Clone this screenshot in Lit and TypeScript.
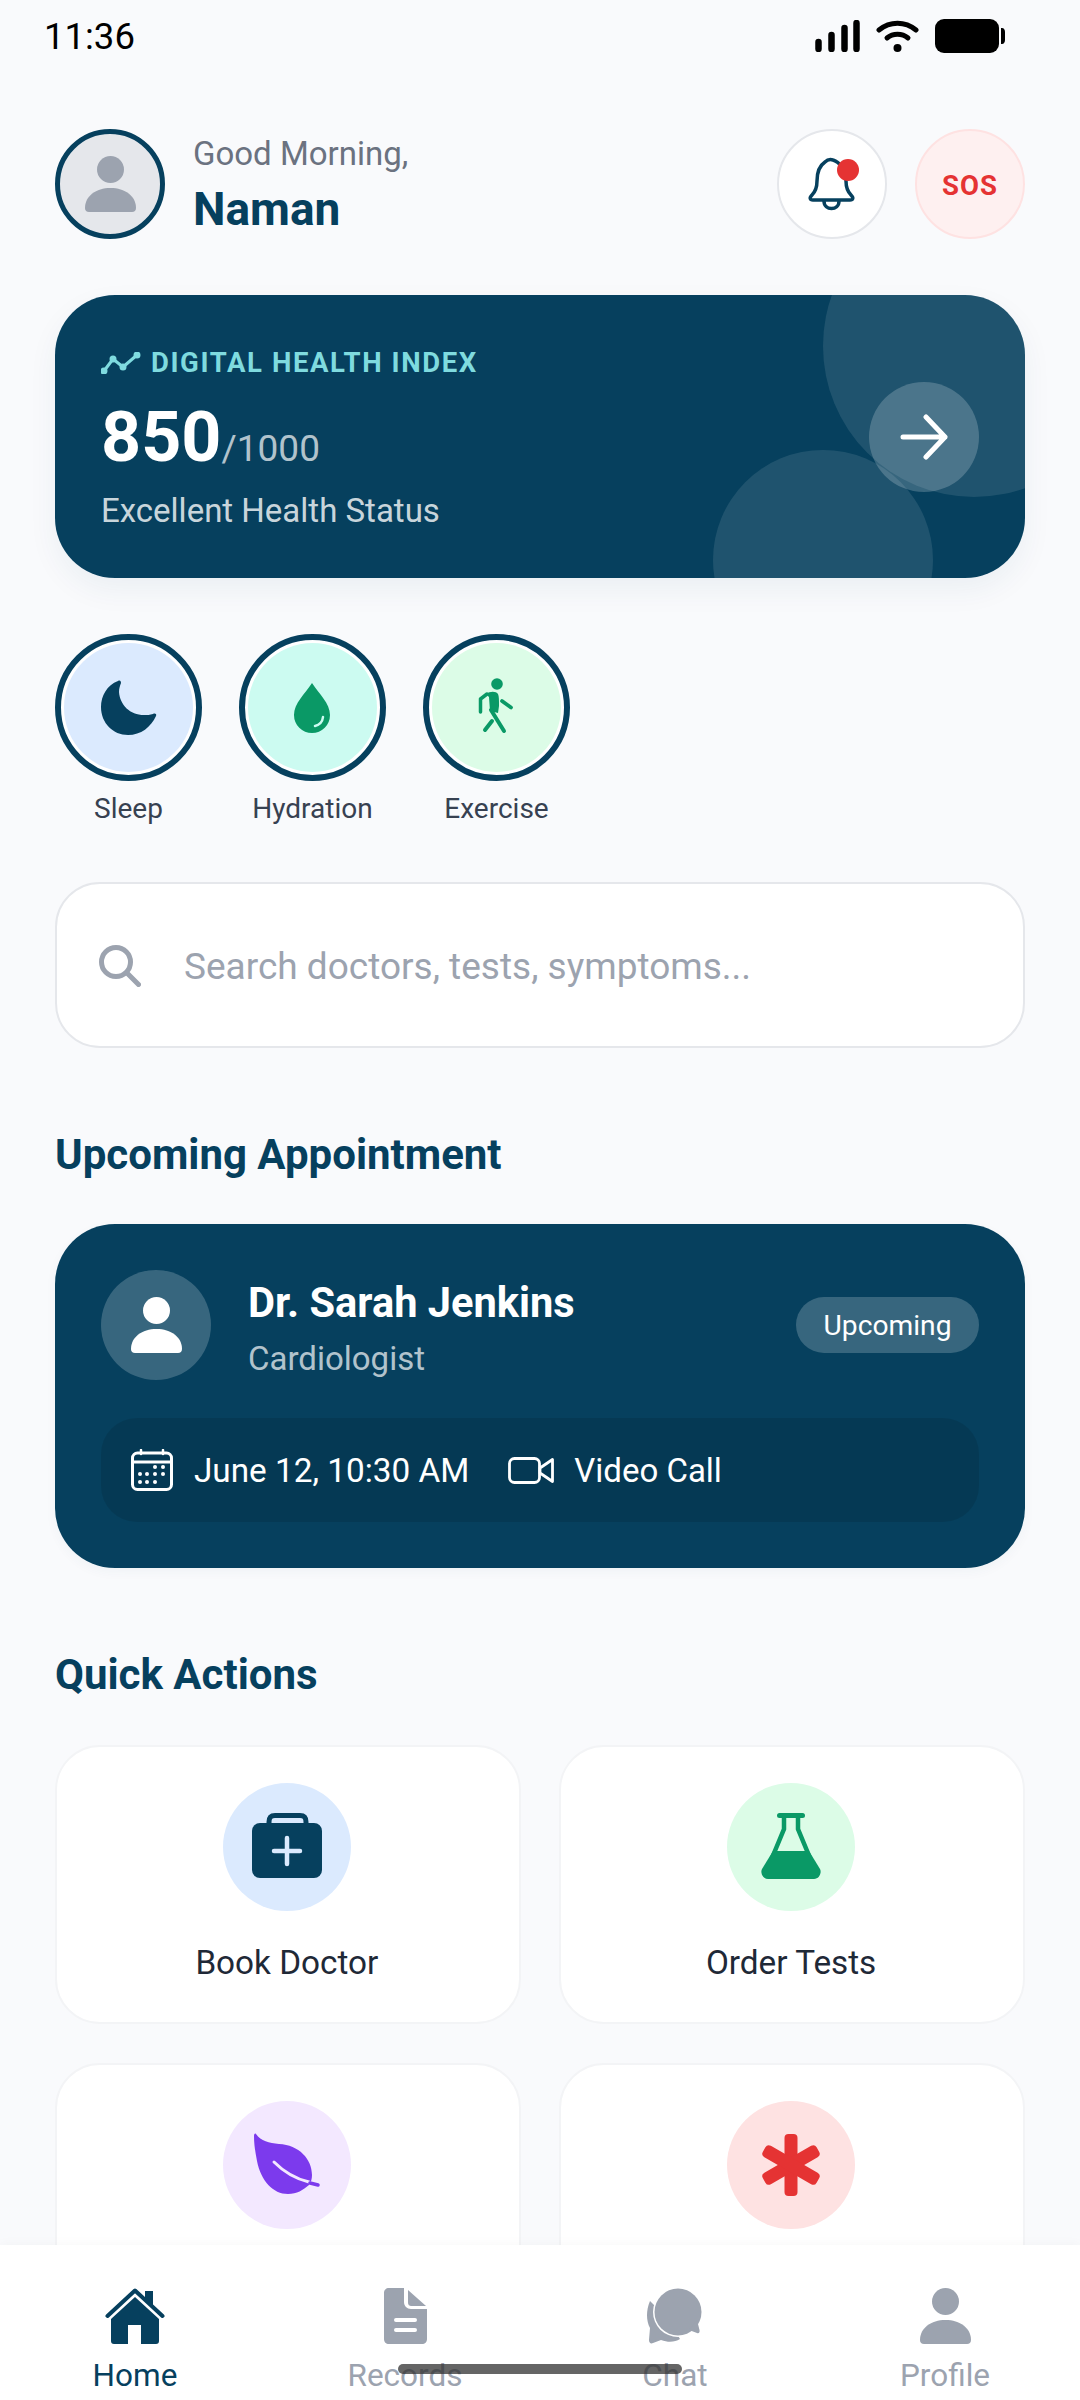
import { LitElement, html, css, svg } from "lit";
import { customElement } from "lit/decorators.js";

const person = (cls: string) => html`<svg class=${cls} viewBox="0 0 51 56"><circle cx="25.5" cy="13.5" r="13.5"/><path d="M0 52C0 40 11 32 25.5 32S51 40 51 52C51 54.500 49.500 56 47 56H4C1.500 56 0 54.500 0 52Z"/></svg>`;

@customElement("app-root")
export class AppRoot extends LitElement {
  static styles = css`
    :host { display: block; width: 1080px; height: 2400px; position: relative; overflow: hidden; background: #f9fafc; font-family: Roboto, "Liberation Sans", sans-serif; color: #06405e; }
    .screen { height: 2400px; display: flex; flex-direction: column; }
    .scroll { flex: 1; min-height: 0; overflow: hidden; }
    .status { height: 72px; padding: 0 75px 0 44px; display: flex; align-items: center; justify-content: space-between; color: #000; font-size: 36.5px; }
    .status svg { display: block; }
    .status-icons { display: flex; align-items: center; gap: 16px; }
    main { padding: 57px 55px 0; display: flex; flex-direction: column; }
    .header { display: flex; align-items: center; height: 110px; }
    .avatar { width: 110px; height: 110px; box-sizing: border-box; border: 5px solid #06405e; border-radius: 50%; background: #e5e7eb; display: flex; align-items: center; justify-content: center; margin-right: 28px; }
    .avatar svg { width: 51px; height: 56px; fill: #9ca3af; }
    .hello { flex: 1; display: flex; flex-direction: column; gap: 11px; padding-top: 3px; }
    .greet { font-size: 33px; line-height: 36px; color: #6b7280; }
    .name { font-size: 46px; line-height: 52px; font-weight: 700; }
    .round { width: 110px; height: 110px; box-sizing: border-box; border-radius: 50%; display: flex; align-items: center; justify-content: center; }
    .bell { background: #fff; border: 2.75px solid #e5e7eb; margin-right: 28px; }
    .bell svg { width: 60px; height: 60px; }
    .sos { background: #fef0f0; border: 2.75px solid #fee2e2; color: #e53333; font-size: 27.5px; font-weight: 700; letter-spacing: 1px; padding-top: 2px; }
    .health { margin-top: 56px; height: 283px; box-sizing: border-box; padding: 0 46px; position: relative; overflow: hidden; border-radius: 60px; background: #06405e; box-shadow: 0 12px 30px rgba(6, 64, 94, 0.06); display: flex; align-items: center; justify-content: space-between; color: #fff; }
    .blob { position: absolute; border-radius: 50%; background: rgba(255, 255, 255, 0.1); }
    .blob.a { width: 302px; height: 302px; top: -100px; right: -100px; }
    .blob.b { width: 220px; height: 220px; bottom: -92px; right: 92px; }
    .health-text { position: relative; display: flex; flex-direction: column; padding-top: 3px; }
    .index { display: flex; align-items: center; gap: 10px; color: #7fdbdf; font-size: 27.5px; line-height: 32px; font-weight: 700; letter-spacing: 1.6px; padding-top: 1.5px; }
    .score { margin-top: 18.5px; font-size: 70px; line-height: 80px; font-weight: 700; }
    .score span { font-size: 37px; font-weight: 400; color: rgba(255, 255, 255, 0.7); }
    .status-text { margin-top: 1.5px; font-size: 33px; line-height: 40px; color: rgba(255, 255, 255, 0.8); }
    .go { position: relative; width: 110px; height: 110px; border-radius: 50%; background: rgba(255, 255, 255, 0.2); display: flex; align-items: center; justify-content: center; }
    .rings { margin-top: 56px; display: flex; gap: 37px; }
    .ring-item { width: 147px; display: flex; flex-direction: column; align-items: center; gap: 10.5px; }
    .ring { width: 147px; height: 147px; box-sizing: border-box; border: 6px solid #06405e; border-radius: 50%; padding: 3px; background: #fff; }
    .ring div { width: 100%; height: 100%; border-radius: 50%; }
    .ring svg { display: block; width: 100%; height: 100%; }
    .ring-label { font-size: 28px; line-height: 34px; color: #374151; white-space: nowrap; }
    .search { margin-top: 56.5px; height: 166px; box-sizing: border-box; border: 2.75px solid #e5e7eb; border-radius: 45px; background: #fff; display: flex; align-items: center; padding: 2px 0 0 42px; gap: 43px; font-size: 37px; color: #9ca3af; }
    .title { font-size: 42px; line-height: 50px; font-weight: 700; margin: 0; }
    .title.one { margin-top: 81.5px; }
    .title.two { margin-top: 81.5px; }
    .appt { margin-top: 44.5px; height: 344px; box-sizing: border-box; padding: 46px 46px; border-radius: 60px; background: #06405e; color: #fff; box-shadow: 0 4px 12px rgba(6, 64, 94, 0.04); display: flex; flex-direction: column; }
    .appt-top { display: flex; align-items: center; height: 110px; }
    .doc { width: 110px; height: 110px; border-radius: 50%; background: rgba(255, 255, 255, 0.2); display: flex; align-items: center; justify-content: center; margin-right: 37px; }
    .doc svg { width: 51px; height: 56px; fill: #fff; }
    .doc-text { flex: 1; display: flex; flex-direction: column; gap: 10.5px; padding-top: 6.5px; }
    .doc-name { font-size: 41.6px; line-height: 50px; font-weight: 700; }
    .doc-role { font-size: 33px; line-height: 40px; color: rgba(255, 255, 255, 0.7); }
    .badge { height: 56px; padding: 0 27.5px; border-radius: 28px; background: rgba(255, 255, 255, 0.2); font-size: 28.2px; display: flex; align-items: center; }
    .when { margin-top: 38px; height: 104px; box-sizing: border-box; padding: 0 30px; border-radius: 36px; background: rgba(0, 0, 0, 0.1); display: flex; align-items: center; font-size: 33.3px; }
    .when svg { display: block; flex: none; }
    .when .t1 { margin: 0 39px 0 21px; }
    .when .t2 { margin-left: 20px; font-size: 33px; }
    .grid { margin-top: 45.5px; display: grid; grid-template-columns: 1fr 1fr; gap: 38.5px; }
    .action { height: 279px; box-sizing: border-box; background: #fff; border: 2.75px solid #f3f4f6; border-radius: 45px; padding: 36px 2px 0 0; display: flex; flex-direction: column; align-items: center; }
    .chip { width: 128px; height: 128px; border-radius: 50%; flex: none; }
    .chip svg { display: block; width: 128px; height: 128px; }
    .action-label { margin-top: 31.5px; font-size: 33.3px; line-height: 40px; color: #1f2937; }
    nav { position: relative; flex: none; height: 155px; box-sizing: border-box; padding-top: 43px; background: #fff; box-shadow: 0 -3px 9px rgba(0, 0, 0, 0.025); display: grid; grid-template-columns: repeat(4, 1fr); }
    .tab { display: flex; flex-direction: column; align-items: center; color: #9ca3af; font-size: 31.5px; line-height: 40px; }
    .tab.on { color: #06405e; }
    .tab-ico { height: 56px; margin-bottom: 12px; display: flex; align-items: center; justify-content: center; }
    .tab-ico svg { display: block; height: 56px; fill: currentColor; }
    .person-nav { width: 51px; }
    .pill { position: absolute; left: 398px; top: 119px; width: 284px; height: 10px; border-radius: 5px; background: rgba(50, 50, 50, 0.75); }
  `;

  private action(label: string, bg: string, icon: unknown) {
    return html`<div class="action"><div class="chip" style="background:${bg}"><svg viewBox="0 0 128 128">${icon}</svg></div>${label ? html`<div class="action-label">${label}</div>` : ""}</div>`;
  }

  render() {
    const moon = svg`<path fill="#06405e" d="M63 47C52 51 46 62 46 73C46 89 58 101 73 101C86 101 96 93 101 82C102 80 100 79 98 80C95 81 92 81 89 81C75 81 65 71 64 58C64 54 65 52 66 49C66 47 65 46 63 47Z"/>`;
    const drop = svg`<path fill="#0a9966" d="M73 49C66 60 55 69 55 81A18 18 0 0 0 91 81C91 69 80 60 73 49Z"/><path fill="none" stroke="#ccfbf1" stroke-width="2.500" stroke-linecap="round" d="M84 83C83.500 88 80 91 76 92"/>`;
    const walk = svg`<g fill="none" stroke="#0a9966" stroke-linecap="round" stroke-linejoin="round"><circle cx="74" cy="50" r="5.800" fill="#0a9966" stroke="none"/><path fill="#0a9966" stroke="none" d="M63 60C67 57 73 57 75 60C76 62 76 66 76 72L75 79L67 77L66 63Z"/><path stroke-width="3.500" d="M64 60L57.500 65V78"/><path stroke-width="3.800" d="M79 67L88 73.500"/><path stroke-width="4" d="M68 76L81 97M69 87L62 96"/></g>`;
    const bag = svg`<path fill="none" stroke="#06405e" stroke-width="5" d="M46 42V39C46 34 48 32.500 52 32.500H77C81 32.500 83 34 83 39V42"/><rect x="29" y="40" width="70" height="55" rx="8" fill="#06405e"/><path stroke="#dbeafe" stroke-width="4.500" stroke-linecap="round" d="M64 55V81M51 68H77"/>`;
    const flask = svg`<g transform="translate(0 -2)"><path fill="none" stroke="#0a9966" stroke-width="4.500" stroke-linecap="round" d="M57 35V48L45 77M71 35V48L83 77"/><rect x="50" y="32" width="28" height="5" rx="2.500" fill="#0a9966"/><path fill="#0a9966" d="M46 70H82L93 88C95 92 92 98 87 98H41C36 98 33 92 35 88Z"/></g>`;
    const leaf = svg`<path fill="#7c3aed" d="M33 33C38 40 46 42 56 43C76 44 89 58 89 74C89 78 88 81 86 84C80 89 74 93 65 93C50 93 38 80 34 60C32 50 31 42 31 35C31 33 32 32 33 33Z"/><path fill="none" stroke="#f3e8ff" stroke-width="3" stroke-linecap="round" d="M51 61C61 71 73 78 86 81"/><path fill="none" stroke="#7c3aed" stroke-width="3.500" stroke-linecap="round" d="M87 82L95 84"/>`;
    const star = svg`<g fill="#e53333" transform="translate(64 64)"><rect x="-6.500" y="-31" width="13" height="62" rx="4"/><rect x="-6.500" y="-31" width="13" height="62" rx="4" transform="rotate(60)"/><rect x="-6.500" y="-31" width="13" height="62" rx="4" transform="rotate(-60)"/></g>`;
    return html`<div class="screen">
      <div class="scroll">
        <div class="status">
          <span>11:36</span>
          <div class="status-icons">
            <svg width="45" height="32" viewBox="0 0 45 32"><g stroke="#000" stroke-width="6.500" stroke-linecap="round"><path d="M3.500 22V29M16.500 15V29M29.500 8V29M41.500 3V29"/></g></svg>
            <svg width="43" height="32" viewBox="0 0 43 32" fill="none" stroke="#000" stroke-width="5" stroke-linecap="round"><path d="M3 10C14 1 29 1 40 10"/><path d="M11 18C17 13 26 13 32 18"/><circle cx="21.500" cy="28" r="4" fill="#000" stroke="none"/></svg>
            <svg width="70" height="34" viewBox="0 0 70 34"><rect x="0" y="0" width="64" height="34" rx="9"/><path d="M66 9H67C69 9 70 11 70 13V21C70 23 69 25 67 25H66Z"/></svg>
          </div>
        </div>
        <main>
          <div class="header">
            <div class="avatar">${person("")}</div>
            <div class="hello"><div class="greet">Good Morning,</div><div class="name">Naman</div></div>
            <div class="round bell">
              <svg viewBox="0 0 60 60" fill="none" stroke="#06405e" stroke-width="3.500" stroke-linecap="round" stroke-linejoin="round"><path d="M10 41C7 44 8 46 11 46H48C51 46 52 44 49 41C45 37 44 33 44 27C44 17 38 8 31 6C28 5 25 6 23 8C17 12 15 18 15 27C15 33 14 37 10 41Z"/><path d="M22 47C22 57 37 57 37 47"/><circle cx="46" cy="16" r="11" fill="#e53333" stroke="none"/></svg>
            </div>
            <div class="round sos">SOS</div>
          </div>

          <div class="health">
            <div class="blob a"></div>
            <div class="blob b"></div>
            <div class="health-text">
              <div class="index"><svg width="40" height="22" viewBox="0 0 40 22" fill="none" stroke="#7fdbdf" stroke-width="3" stroke-linecap="round" stroke-linejoin="round"><path d="M3 19L12 7L22 15L36 3"/><circle cx="3" cy="19" r="2" fill="#7fdbdf"/><circle cx="12" cy="7" r="2" fill="#7fdbdf"/><circle cx="22" cy="15" r="2" fill="#7fdbdf"/><circle cx="36" cy="3" r="2" fill="#7fdbdf"/></svg>DIGITAL HEALTH INDEX</div>
              <div class="score">850<span>/1000</span></div>
              <div class="status-text">Excellent Health Status</div>
            </div>
            <div class="go"><svg width="48" height="46" viewBox="0 0 48 46" fill="none" stroke="#fff" stroke-width="5" stroke-linecap="round" stroke-linejoin="round"><path d="M3 23H45M26 3L45 23L26 43"/></svg></div>
          </div>

          <div class="rings">
            <div class="ring-item"><div class="ring"><div style="background:#dbeafe"><svg viewBox="9 9 129 129">${moon}</svg></div></div><div class="ring-label">Sleep</div></div>
            <div class="ring-item"><div class="ring"><div style="background:#ccfbf1"><svg viewBox="9 9 129 129">${drop}</svg></div></div><div class="ring-label">Hydration</div></div>
            <div class="ring-item"><div class="ring"><div style="background:#dcfce7"><svg viewBox="9 9 129 129">${walk}</svg></div></div><div class="ring-label">Exercise</div></div>
          </div>

          <div class="search">
            <svg width="42" height="42" viewBox="0 0 42 42" fill="none" stroke="#9ca3af" stroke-width="5" stroke-linecap="round"><circle cx="17" cy="17" r="14.500"/><path d="M28 28L39.500 39.500"/></svg>
            <span>Search doctors, tests, symptoms...</span>
          </div>

          <h2 class="title one">Upcoming Appointment</h2>
          <div class="appt">
            <div class="appt-top">
              <div class="doc">${person("")}</div>
              <div class="doc-text"><div class="doc-name">Dr. Sarah Jenkins</div><div class="doc-role">Cardiologist</div></div>
              <div class="badge">Upcoming</div>
            </div>
            <div class="when">
              <svg width="42" height="42" viewBox="0 0 42 42" fill="none" stroke="#fff"><rect x="1.500" y="4" width="39" height="36.500" rx="5" stroke-width="3"/><path stroke-width="3" d="M1.500 13H40.500"/><path stroke-width="2.500" stroke-linecap="round" d="M10 1V5M32 1V5"/><g fill="#fff" stroke="none"><circle cx="24" cy="18" r="2"/><circle cx="32" cy="18" r="2"/><circle cx="9" cy="25" r="2"/><circle cx="16" cy="25" r="2"/><circle cx="24" cy="25" r="2"/><circle cx="32" cy="25" r="2"/><circle cx="9" cy="33" r="2"/><circle cx="16" cy="33" r="2"/><circle cx="24" cy="33" r="2"/></g></svg>
              <span class="t1">June 12, 10:30 AM</span>
              <svg width="46" height="27" viewBox="0 0 46 27" fill="none" stroke="#fff" stroke-width="2.800" stroke-linejoin="round"><rect x="1.500" y="1.500" width="30" height="24" rx="5"/><path d="M32 11L44.500 2.500V24.500L32 16Z"/></svg>
              <span class="t2">Video Call</span>
            </div>
          </div>

          <h2 class="title two">Quick Actions</h2>
          <div class="grid">
            ${this.action("Book Doctor", "#dbeafe", bag)}
            ${this.action("Order Tests", "#dcfce7", flask)}
            ${this.action("", "#f3e8ff", leaf)}
            ${this.action("", "#fee2e2", star)}
          </div>
        </main>
      </div>
      <nav>
        <div class="tab on"><div class="tab-ico"><svg viewBox="0 0 60 56" width="60"><path d="M40 3H48V20L40 13Z"/><path fill="none" stroke="currentColor" stroke-width="4" stroke-linecap="round" stroke-linejoin="round" d="M2.500 28L30 2.500L57.500 28"/><path d="M6 31L30 9L54 31V53C54 55 53 56 51 56H36V37H23V56H9C7 56 6 55 6 53Z"/></svg></div>Home</div>
        <div class="tab"><div class="tab-ico"><svg viewBox="0 0 43 56" width="43"><path fill-rule="evenodd" d="M5 0H20V14C20 18 23 21 27 21H43V51C43 54 41 56 38 56H5C2 56 0 54 0 51V5C0 2 2 0 5 0Z"/><path d="M24 2L42 18H28C25 18 24 17 24 14Z"/><path stroke="#fff" stroke-width="4" stroke-linecap="round" d="M12 32H31M12 42H31"/></svg></div>Records</div>
        <div class="tab"><div class="tab-ico"><svg viewBox="0 0 56 56" width="56"><path d="M3 13C-1 22 -1 33 3 40L2 52C2 55 4 56 6 55L14 52C22 55 28 54 33 51L20 30Z"/><circle cx="31" cy="24" r="25" fill="#fff"/><circle cx="31" cy="24" r="23.500"/><path d="M42 42L50 45C52 46 53 44 52.500 42L50 32Z"/></svg></div>Chat</div>
        <div class="tab"><div class="tab-ico">${person("person-nav")}</div>Profile</div>
        <div class="pill"></div>
      </nav>
    </div>`;
  }
}
